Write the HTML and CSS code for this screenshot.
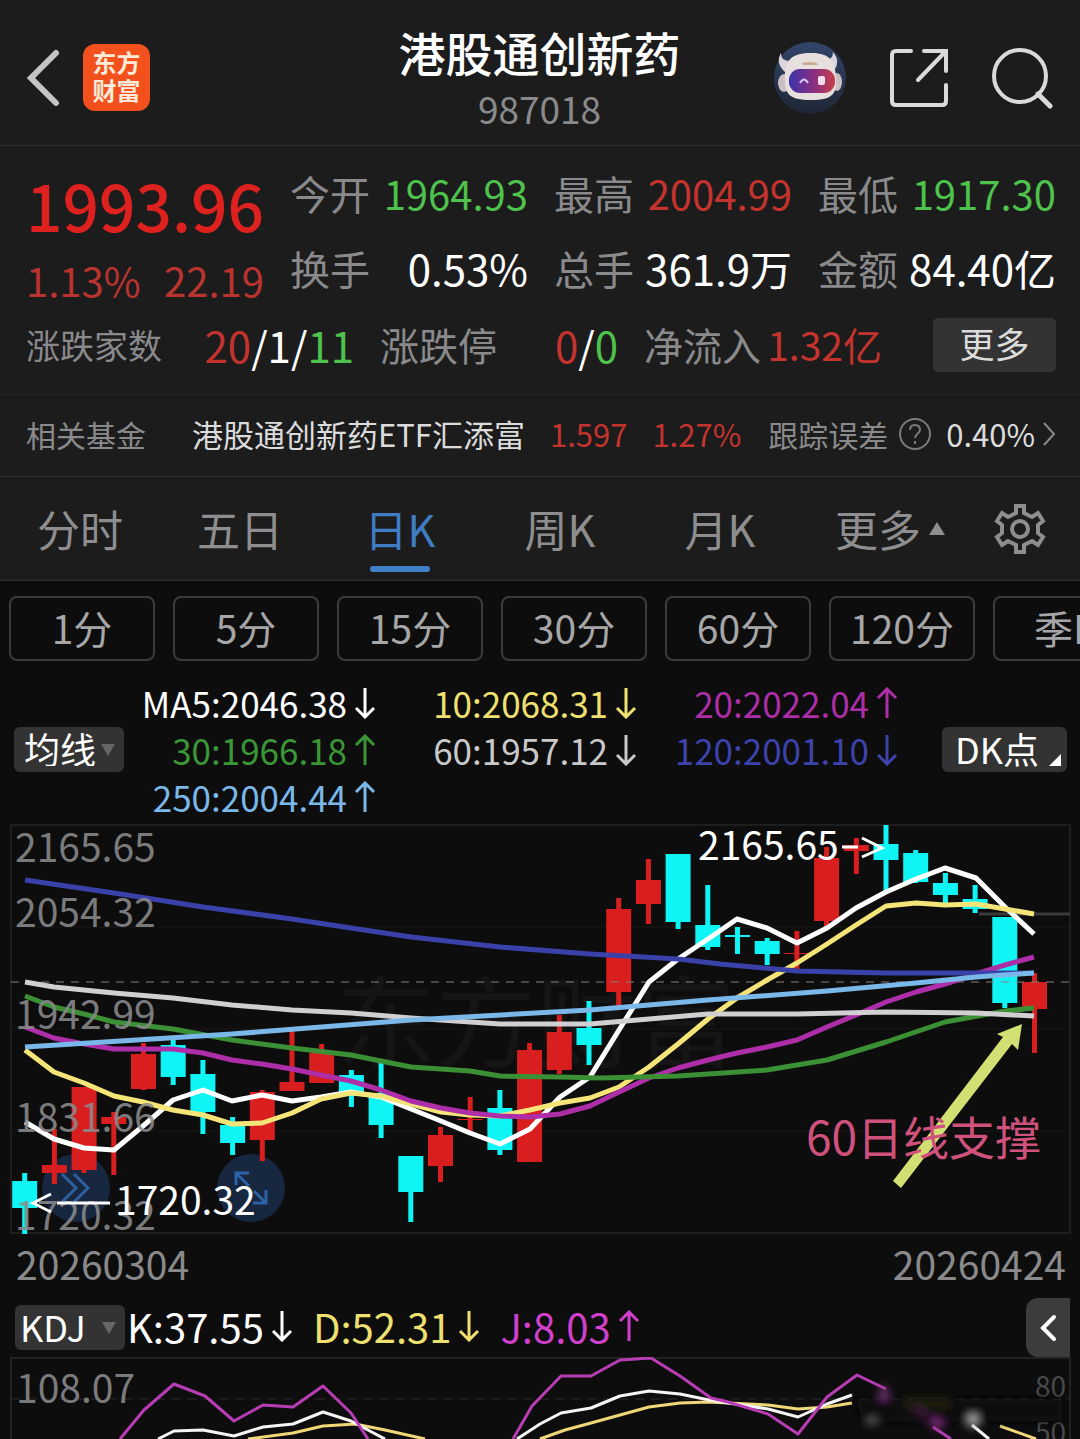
FILE: index.html
```html
<!DOCTYPE html>
<html lang="zh-CN">
<head>
<meta charset="UTF-8">
<meta name="viewport" content="width=device-width, initial-scale=1.0">
<title>港股通创新药 987018</title>
<link rel="stylesheet" href="styles.css">
</head>
<body>

<svg class="defs" aria-hidden="true">
    <symbol id="down" viewBox="0 0 22 32"><path d="M11 1v29M2 21l9 9 9-9"/></symbol>
    <symbol id="up" viewBox="0 0 22 32"><path d="M11 31V2M2 11l9-9 9 9"/></symbol>
</svg>

<header class="header">
    <div class="header-left">
        <button class="icon-btn" aria-label="返回">
            <svg width="34" height="58" viewBox="0 0 34 58"><path d="M30 4L5 29l25 25" fill="none" stroke="#c4c4c4" stroke-width="6" stroke-linecap="round"/></svg>
        </button>
        <a href="#" class="logo"><span>东方</span><span>财富</span></a>
    </div>
    <div class="header-title">
        <h1>港股通创新药</h1>
        <p>987018</p>
    </div>
    <div class="header-right">
        <button class="icon-btn" aria-label="智能助手">
            <svg width="74" height="74" viewBox="0 0 74 74">
                <defs>
                    <linearGradient id="sky" x1="0" y1="0" x2="0" y2="1"><stop offset="0" stop-color="#33456a"/><stop offset="1" stop-color="#1e2634"/></linearGradient>
                    <linearGradient id="visor"><stop offset="0" stop-color="#3c33a8"/><stop offset=".55" stop-color="#8a2f80"/><stop offset="1" stop-color="#c8404a"/></linearGradient>
                </defs>
                <circle cx="37" cy="37" r="36" fill="url(#sky)"/>
                <path d="M8 12q-6 10 4 19l7-11q-11 1-11-8zM60 11q8 9 1 19l-9-11q8 0 8-8z" fill="#d9d5da"/>
                <ellipse cx="11" cy="42" rx="6" ry="9" fill="#c9c0c4"/>
                <ellipse cx="64" cy="41" rx="5" ry="9" fill="#c9c0c4"/>
                <path d="M12 38C11 18 20 12 38 12c17 0 24 6 25 24 1 16-2 23-25 23-22 0-26-6-26-21z" fill="#e6dfdd"/>
                <path d="M29 22q8-2 14 0t-3 2H30z" fill="#c9ad92"/>
                <rect x="16" y="28" width="46" height="24" rx="11" fill="url(#visor)"/>
                <path d="M27 42q4-7 8 0" fill="none" stroke="#d9c8f5" stroke-width="2"/>
                <rect x="45" y="35" width="7" height="9" rx="2" fill="#f3dfea"/>
            </svg>
        </button>
        <button class="icon-btn" aria-label="分享">
            <svg width="60" height="60" viewBox="0 0 60 60"><path d="M22 3H7q-4 0-4 4v46q0 4 4 4h46q4 0 4-4V37M35 3h22v20M56 4L29 32" fill="none" stroke="#dadada" stroke-width="4" stroke-linecap="round"/></svg>
        </button>
        <button class="icon-btn" aria-label="搜索">
            <svg width="62" height="62" viewBox="0 0 62 62"><circle cx="29" cy="29" r="26" fill="none" stroke="#dadada" stroke-width="4"/><path d="M47 47l12 12" stroke="#dadada" stroke-width="5" stroke-linecap="round"/></svg>
        </button>
    </div>
</header>

<section class="quote">
    <div class="stats">
        <div class="price">
            <strong>1993.96</strong>
            <div class="change"><span>1.13%</span><span>22.19</span></div>
        </div>
        <div class="stat"><span>今开</span><b class="green">1964.93</b></div>
        <div class="stat"><span>最高</span><b class="red">2004.99</b></div>
        <div class="stat"><span>最低</span><b class="green">1917.30</b></div>
        <div class="stat large"><span>换手</span><b>0.53%</b></div>
        <div class="stat large"><span>总手</span><b>361.9万</b></div>
        <div class="stat large"><span>金额</span><b>84.40亿</b></div>
    </div>
    <div class="breadth">
        <div class="stat large"><span class="small">涨跌家数</span><b><i class="red">20</i>/1/<i class="green">11</i></b></div>
        <div class="stat large"><span>涨跌停</span><b><i class="red">0</i>/<i class="green">0</i></b></div>
        <div class="stat"><span>净流入</span><b class="red">1.32亿</b></div>
        <button class="more-btn">更多</button>
    </div>
</section>

<section class="fund">
    <span class="fund-label">相关基金</span>
    <a href="#" class="fund-name">港股通创新药ETF汇添富</a>
    <span class="fund-price red">1.597</span>
    <span class="fund-rate red">1.27%</span>
    <span>跟踪误差</span>
    <svg class="help" width="34" height="34" viewBox="0 0 34 34"><circle cx="17" cy="17" r="15" fill="none" stroke="#7c7c7e" stroke-width="2"/><path d="M12 13q0-5 5-5t5 5c0 3-5 4-5 8M17 24v3" fill="none" stroke="#7c7c7e" stroke-width="2"/></svg>
    <span class="fund-error">0.40%</span>
    <svg class="chevron" width="14" height="26" viewBox="0 0 14 26"><path d="M2 2l10 11L2 24" fill="none" stroke="#8a8a8c" stroke-width="2"/></svg>
</section>

<nav class="tabs">
    <button>分时</button>
    <button>五日</button>
    <button class="active">日K</button>
    <button>周K</button>
    <button>月K</button>
    <button class="more-tab">更多<span class="caret-up"></span></button>
    <button aria-label="设置">
        <svg width="52" height="52" viewBox="0 0 52 52" fill="none" stroke="#8e8e90" stroke-width="4"><path d="M22 3h8v7l8 4 6-4 5 8-5 4v8l5 4-5 8-6-4-8 4v7h-8v-7l-8-4-6 4-5-8 5-4v-8l-5-4 5-8 6 4 8-4z"/><circle cx="26" cy="26" r="8"/></svg>
    </button>
</nav>

<div class="periods">
    <button>1分</button>
    <button>5分</button>
    <button>15分</button>
    <button>30分</button>
    <button>60分</button>
    <button>120分</button>
    <button>季K</button>
</div>

<section class="ma">
    <div class="picker">
        <select aria-label="主图指标"><option>均线</option></select>
    </div>
    <div class="ma-list">
        <span class="white">MA5:2046.38<svg><use href="#down"/></svg></span>
        <span class="yellow">10:2068.31<svg><use href="#down"/></svg></span>
        <span class="magenta">20:2022.04<svg><use href="#up"/></svg></span>
        <span class="ma-green">30:1966.18<svg><use href="#up"/></svg></span>
        <span class="silver">60:1957.12<svg><use href="#down"/></svg></span>
        <span class="indigo">120:2001.10<svg><use href="#down"/></svg></span>
        <span class="sky">250:2004.44<svg><use href="#up"/></svg></span>
    </div>
    <button class="dk-btn">DK点</button>
</section>

<section class="chart">
    <button class="round-btn forward" aria-label="快进">
        <svg width="34" height="40" viewBox="0 0 34 40" fill="none" stroke="#2d5f9f" stroke-width="3"><path d="M3 6l14 14L3 34M15 6l14 14-14 14"/></svg>
    </button>
    <button class="round-btn expand" aria-label="全屏">
        <svg width="36" height="36" viewBox="0 0 36 36" fill="none" stroke="#2d62a8" stroke-width="3"><path d="M3 15V3h13M3 3l13 13M33 20v13H20M33 33L21 21"/></svg>
    </button>
    <svg class="plot" viewBox="0 0 1080 420">
        <text class="watermark" x="336" y="240">东方财富</text>
        <path class="grid" d="M11 107H1070M11 209H1070M11 311H1070"/>
        <rect class="frame" x="11" y="5" width="1059" height="408"/>
        <path d="M979 94H1070" stroke="#3a3a3a" stroke-width="3"/>
        <g id="candles"></g>
        <path d="M11 162H1070" stroke="#86807a" stroke-dasharray="8 7"/>
        <g id="averages"></g>
        <g class="axis">
            <text x="15" y="42">2165.65</text>
            <text x="15" y="107">2054.32</text>
            <text x="15" y="209">1942.99</text>
            <text x="15" y="312">1831.66</text>
            <text x="15" y="410">1720.32</text>
        </g>
        <g class="mark">
            <text x="698" y="40">2165.65</text>
            <path d="M842 27h16M862 18l20 10-20 9"/>
            <text x="115" y="395">1720.32</text>
            <path d="M110 383H57M51 374l-18 9 18 9"/>
        </g>
        <path d="M893 361L1003 217L997 214L1022 204L1018 230L1012 224L901 368Z" fill="#d2df72"/>
        <text class="note" x="806" y="335">60日线支撑</text>
    </svg>
</section>

<div class="dates"><span>20260304</span><span>20260424</span></div>

<section class="kdj">
    <div class="picker">
        <select aria-label="副图指标"><option>KDJ</option></select>
    </div>
    <span class="white">K:37.55<svg><use href="#down"/></svg></span>
    <span class="yellow">D:52.31<svg><use href="#down"/></svg></span>
    <span class="pink">J:8.03<svg><use href="#up"/></svg></span>
    <button class="side-btn" aria-label="展开">
        <svg width="18" height="28" viewBox="0 0 18 28"><path d="M15 3L4 14l11 11" fill="none" stroke="#fff" stroke-width="4" stroke-linecap="round"/></svg>
    </button>
</section>

<section class="chart">
    <svg class="plot clipped" viewBox="0 0 1080 82">
        <defs><filter id="soft" x="-50%" y="-50%" width="200%" height="200%"><feGaussianBlur stdDeviation="4"/></filter></defs>
        <path d="M11 82V1H1070V82" fill="none" stroke="#222" stroke-width="2"/>
        <path d="M11 42H1070" stroke="#2c2c2c" stroke-dasharray="10 6"/>
        <g class="axis"><text x="16" y="46">108.07</text></g>
        <g class="levels"><text x="1035" y="40">80</text><text x="1035" y="86">50</text></g>
        <g id="kdjLines"></g>
        <g filter="url(#soft)">
            <path d="M856 42H1062V64H862Z" fill="#0b0b0b"/>
            <path d="M884 30v12" stroke="#8a3a8c" stroke-width="7"/>
            <path d="M905 46h45" stroke="#1c1b08" stroke-width="12"/>
            <path d="M914 52l14 6" stroke="#3a1238" stroke-width="8"/>
            <path d="M932 64l10 6" stroke="#8a2f88" stroke-width="8"/>
            <path d="M973 58v12" stroke="#b5b5b5" stroke-width="9"/>
            <path d="M868 66l8-3" stroke="#777" stroke-width="5"/>
        </g>
    </svg>
</section>

<script src="script.js"></script>
</body>
</html>
```
FILE: script.js
```js
const STEP = 29.7;
const START = 24.7;
const BODY = 25;

// [direction, high, low, body top, body bottom]
const candles = [
    ['down', 353, 414, 361, 388],
    ['up', 309, 364, 345, 353],
    ['up', 267, 353, 267, 350],
    ['up', 292, 355, 297, 304],
    ['up', 223, 270, 234, 269],
    ['down', 218, 265, 225, 257],
    ['down', 240, 314, 254, 292],
    ['down', 297, 335, 305, 323],
    ['up', 270, 341, 272, 320],
    ['up', 211, 271, 262, 271],
    ['up', 224, 263, 233, 263],
    ['down', 250, 287, 255, 276],
    ['down', 243, 318, 273, 305],
    ['down', 336, 402, 336, 372],
    ['up', 307, 362, 315, 346],
    ['up', 277, 312, 299, 300],
    ['down', 270, 335, 288, 330],
    ['up', 223, 342, 230, 342],
    ['up', 195, 254, 212, 250],
    ['down', 181, 245, 208, 225],
    ['up', 78, 186, 89, 172],
    ['up', 39, 104, 60, 84],
    ['down', 34, 109, 34, 102],
    ['down', 65, 130, 105, 127],
    ['down', 107, 134, 115, 117],
    ['down', 118, 145, 121, 134],
    ['up', 111, 150, 133, 134],
    ['up', 27, 107, 38, 101],
    ['up', 18, 54, 25, 31],
    ['down', 5, 73, 24, 40],
    ['down', 30, 63, 33, 62],
    ['down', 53, 84, 63, 75],
    ['down', 65, 93, 79, 89],
    ['down', 97, 188, 97, 183],
    ['up', 153, 233, 162, 189]
];

const averages = [
    ['#ffffff', '25,302 54,319 84,328 114,330 143,306 173,280 203,270 232,281 262,275 292,281 321,277 351,272 381,277 411,289 441,301 470,313 500,324 530,309 560,277 590,257 619,210 649,162 678,139 708,119 737,99 767,108 797,123 827,108 856,88 886,72 916,59 945,48 976,58 1005,87 1034,114'],
    ['#f5e478', '25,230 54,252 84,263 114,276 143,282 173,290 203,295 232,304 262,303 292,293 321,279 351,273 381,276 411,284 441,292 470,295 500,296 530,290 560,283 590,278 619,267 649,247 678,224 708,199 737,178 767,160 797,143 827,124 856,105 886,86 916,83 945,85 976,84 1005,89 1034,94'],
    ['#ad2ea8', '25,207 54,218 84,224 114,229 143,229 173,229 203,233 232,240 262,244 292,249 321,255 351,261 381,270 411,281 441,288 470,293 500,296 530,297 560,294 590,286 619,272 649,258 678,248 708,240 737,233 767,227 797,220 827,207 856,195 886,182 916,172 945,164 976,154 1005,145 1034,137'],
    ['#3b8f34', '25,176 54,187 84,194 114,202 173,209 232,220 292,228 351,235 411,247 470,251 500,256 560,257 600,258 678,256 767,250 827,240 886,222 945,202 1005,191 1034,188'],
    ['#d2cfd2', '25,162 54,167 114,173 173,178 232,185 292,190 351,193 411,198 500,204 590,204 649,199 708,194 797,194 886,192 976,193 1034,196'],
    ['#3a41a8', '25,60 114,73 203,87 292,99 351,108 411,117 500,127 590,134 678,139 720,144 797,151 886,153 1034,153'],
    ['#7ab8ea', '25,227 232,214 411,200 590,190 708,180 827,171 916,163 976,157 1034,153']
];

const kdj = [
    ['#f0d878', '248,82 293,76 323,69 355,67 385,73 425,82'],
    ['#f0d878', '540,82 565,73 591,66 649,50 680,46 708,45 768,48 798,52 827,50 852,46'],
    ['#f0d878', '1000,69 1036,82'],
    ['#f5f5f5', '158,82 174,74 203,73 234,79 263,70 293,67 323,55 351,64 385,82'],
    ['#f5f5f5', '517,82 540,67 561,56 591,51 620,39 649,34 680,37 709,43 768,52 798,60 827,47 852,38'],
    ['#f5f5f5', '972,68 989,82'],
    ['#b83db5', '120,82 144,53 174,27 205,39 234,64 263,48 293,50 323,29 351,56 368,82'],
    ['#b83db5', '513,82 532,49 561,19 591,19 620,3 651,1 680,19 711,41 728,45 768,57 798,77 827,40 857,18 886,32'],
    ['#b83db5', '933,70 951,82']
];

document.getElementById('candles').innerHTML = candles.map(([dir, high, low, top, bottom], i) => {
    const x = START + i * STEP;
    return `<g class="${dir}">
        <rect x="${x - 2.5}" y="${high}" width="5" height="${low - high}"/>
        <rect x="${x - BODY / 2}" y="${top}" width="${BODY}" height="${bottom - top}"/>
    </g>`;
}).join('');

function drawLines(id, lines, width) {
    document.getElementById(id).innerHTML = lines.map(([color, points]) =>
        `<polyline points="${points}" fill="none" stroke="${color}" stroke-width="${width}" stroke-linejoin="round"/>`
    ).join('');
}

drawLines('averages', averages, 5);
drawLines('kdjLines', kdj, 3);
```
FILE: styles.css
```css
* {
    box-sizing: border-box;
}
body {
    margin: 0;
    background: #0d0d0d;
    color: #fff;
    font-family: "Noto Sans CJK SC", sans-serif;
    font-size: 40px;
    line-height: 1;
    white-space: nowrap;
    overflow-x: hidden;
}
button, select {
    font-family: inherit;
    border: 0;
    padding: 0;
    background: none;
    color: inherit;
    line-height: 1;
}
a {
    color: inherit;
    text-decoration: none;
}
b, i {
    font-weight: normal;
    font-style: normal;
}
svg {
    display: block;
}
.defs {
    position: absolute;
    width: 0;
    height: 0;
}

/* colours */
.red { color: #c4332e; }
.green { color: #4fc14d; }
.white { color: #fff; }
.yellow { color: #f0e070; }
.magenta { color: #ad2ea8; }
.pink { color: #d040cc; }
.ma-green { color: #3b9636; }
.silver { color: #c9c9cb; }
.indigo { color: #3c43ac; }
.sky { color: #7ab8ea; }

/* header */
.header {
    display: grid;
    grid-template-columns: 1fr auto 1fr;
    align-items: center;
    height: 146px;
    padding: 10px 27px 0 26px;
    background: #1c1c1c;
    border-bottom: 1px solid #303030;
}
.header-left, .header-right {
    display: flex;
    align-items: center;
}
.header-left {
    gap: 23px;
}
.header-right {
    justify-content: flex-end;
    gap: 42px;
}
.logo {
    display: flex;
    flex-direction: column;
    align-items: center;
    justify-content: center;
    gap: 4px;
    width: 67px;
    height: 67px;
    padding-bottom: 3px;
    border-radius: 12px;
    background: #f2501c;
    color: #ffe9d8;
    font-size: 24px;
    font-weight: bold;
}
.header-title {
    padding-bottom: 4px;
    text-align: center;
}
.header-title h1 {
    margin: 0;
    font-size: 47px;
    font-weight: 500;
}
.header-title p {
    margin: 18px 0 0;
    font-size: 37px;
    line-height: 30px;
    color: #8a8a8c;
}

/* quote */
.quote {
    padding: 9px 24px 14px 26px;
    background: #1c1c1c;
    border-bottom: 1px solid #262626;
}
.stats {
    display: grid;
    grid-template-columns: repeat(4, 1fr);
    grid-auto-rows: 75px;
    column-gap: 26px;
    margin-bottom: 4px;
}
.price {
    grid-row: span 2;
    color: #dc211f;
}
.price strong {
    display: block;
    font-size: 64px;
    font-weight: 500;
    line-height: 98px;
}
.change {
    display: flex;
    justify-content: space-between;
    line-height: 54px;
    color: #b9332f;
}
.stat {
    display: flex;
    align-items: center;
    justify-content: space-between;
}
.stat span {
    color: #8a8a8c;
}
.large b {
    font-size: 42px;
}
.breadth {
    display: grid;
    grid-template-columns: 328fr 238fr 238fr 148fr;
    column-gap: 26px;
    height: 71px;
    font-size: 39px;
}
.stat .small {
    font-size: 34px;
}
.more-btn {
    justify-self: end;
    align-self: center;
    width: 123px;
    height: 54px;
    padding-bottom: 4px;
    border-radius: 5px;
    background: #333;
    color: #dcdcdc;
    font-size: 35px;
}

/* related fund */
.fund {
    display: flex;
    align-items: center;
    height: 82px;
    padding: 0 24px 4px 26px;
    background: #1c1c1c;
    border-bottom: 1px solid #303030;
    font-size: 30px;
    color: #8a8a8c;
}
.fund-name {
    margin-left: 46px;
    font-size: 31px;
    color: #dcdcdc;
}
.fund .red {
    margin-left: 25px;
    font-size: 31px;
}
.fund .fund-rate {
    margin-right: 27px;
}
.help {
    margin: 0 14px 0 10px;
}
.fund-error {
    font-size: 31px;
    color: #dcdcdc;
}
.chevron {
    margin-left: auto;
}

/* chart tabs */
.tabs {
    display: grid;
    grid-template-columns: repeat(6, 4fr) 3fr;
    height: 104px;
    background: #1c1c1c;
    border-bottom: 1px solid #303030;
}
.tabs button {
    display: flex;
    align-items: center;
    justify-content: center;
    position: relative;
    font-size: 43px;
    color: #8e8e90;
}
.tabs .more-tab {
    padding-left: 20px;
}
.tabs .active {
    color: #3f7cc4;
}
.tabs .active::after {
    content: "";
    position: absolute;
    left: 50%;
    bottom: 8px;
    width: 60px;
    height: 6px;
    margin-left: -30px;
    border-radius: 3px;
    background: #4080c8;
}
.caret-up {
    margin-left: 8px;
    border: 8px solid transparent;
    border-top: 0;
    border-bottom: 13px solid #8e8e90;
}

/* minute periods */
.periods {
    display: flex;
    gap: 18px;
    padding: 15px 0 0 9px;
    overflow: hidden;
}
.periods button {
    flex: 0 0 146px;
    height: 65px;
    padding-bottom: 3px;
    border: 2px solid #3c3c3c;
    border-radius: 8px;
    font-size: 39px;
    color: #a6a6a8;
}

/* moving averages */
.ma {
    display: flex;
    align-items: center;
    padding: 18px 13px 0 14px;
}
.picker {
    position: relative;
    flex: none;
}
.picker select {
    appearance: none;
    display: block;
    width: 110px;
    height: 45px;
    padding: 0 6px 3px 10px;
    border-radius: 6px;
    background: #333;
    font-size: 36px;
}
.picker::after {
    content: "";
    position: absolute;
    right: 9px;
    top: 17px;
    border: 7px solid transparent;
    border-bottom: 0;
    border-top: 12px solid #666;
}
.ma-list {
    flex: 1;
    display: grid;
    grid-template-columns: 252fr 261fr 261fr;
    grid-auto-rows: 47px;
    font-size: 35px;
}
.ma-list span, .kdj > span {
    display: flex;
    align-items: center;
    justify-content: flex-end;
}
.ma-list svg, .kdj > span svg {
    width: 22px;
    height: 32px;
    margin-left: 7px;
    fill: none;
    stroke: currentColor;
    stroke-width: 3;
}
.dk-btn {
    position: relative;
    width: 125px;
    height: 45px;
    margin-left: 44px;
    padding: 0 15px 4px 0;
    border-radius: 6px;
    background: #333;
    font-size: 36px;
}
.dk-btn::after {
    content: "";
    position: absolute;
    right: 6px;
    bottom: 6px;
    border-left: 12px solid transparent;
    border-bottom: 12px solid #fff;
}

/* charts */
.chart {
    position: relative;
}
.plot {
    position: relative;
    width: 100%;
    height: auto;
    overflow: visible;
    pointer-events: none;
}
.clipped {
    overflow: hidden;
}
.round-btn {
    position: absolute;
    bottom: 18px;
    display: flex;
    align-items: center;
    justify-content: center;
    width: 68px;
    height: 68px;
    border-radius: 50%;
    background: #172740;
}
.forward { left: 42px; }
.expand { left: 217px; }
.watermark {
    font-size: 100px;
    fill: #151515;
}
.grid {
    stroke: #191919;
}
.frame {
    fill: none;
    stroke: #1e1e1e;
    stroke-width: 2;
}
.up { fill: #d81e1e; }
.down { fill: #0ff5f5; }
.axis {
    font-size: 39px;
    fill: #8a8a8c;
    fill-opacity: .9;
}
.mark {
    font-size: 39px;
    fill: #fff;
}
.mark path {
    fill: none;
    stroke: #fff;
    stroke-width: 3;
}
.note {
    font-size: 46px;
    fill: #d0527c;
}
.levels {
    font-size: 28px;
    fill: #4a4a4a;
}
.dates {
    display: flex;
    justify-content: space-between;
    align-items: center;
    height: 49px;
    padding: 0 14px 2px 16px;
    font-size: 39px;
    color: #8a8a8c;
}

/* kdj */
.kdj {
    display: flex;
    align-items: center;
    height: 68px;
    padding: 9px 10px 0 15px;
}
.kdj .picker select {
    padding-left: 5px;
}
.kdj > span {
    height: 40px;
    margin-right: 20px;
    padding-bottom: 3px;
}
.kdj .picker {
    margin-right: 2px;
}
.side-btn {
    display: flex;
    align-items: center;
    justify-content: center;
    width: 44px;
    height: 59px;
    margin-left: auto;
    border-radius: 12px 0 0 12px;
    background: #3c3c3c;
}
```
